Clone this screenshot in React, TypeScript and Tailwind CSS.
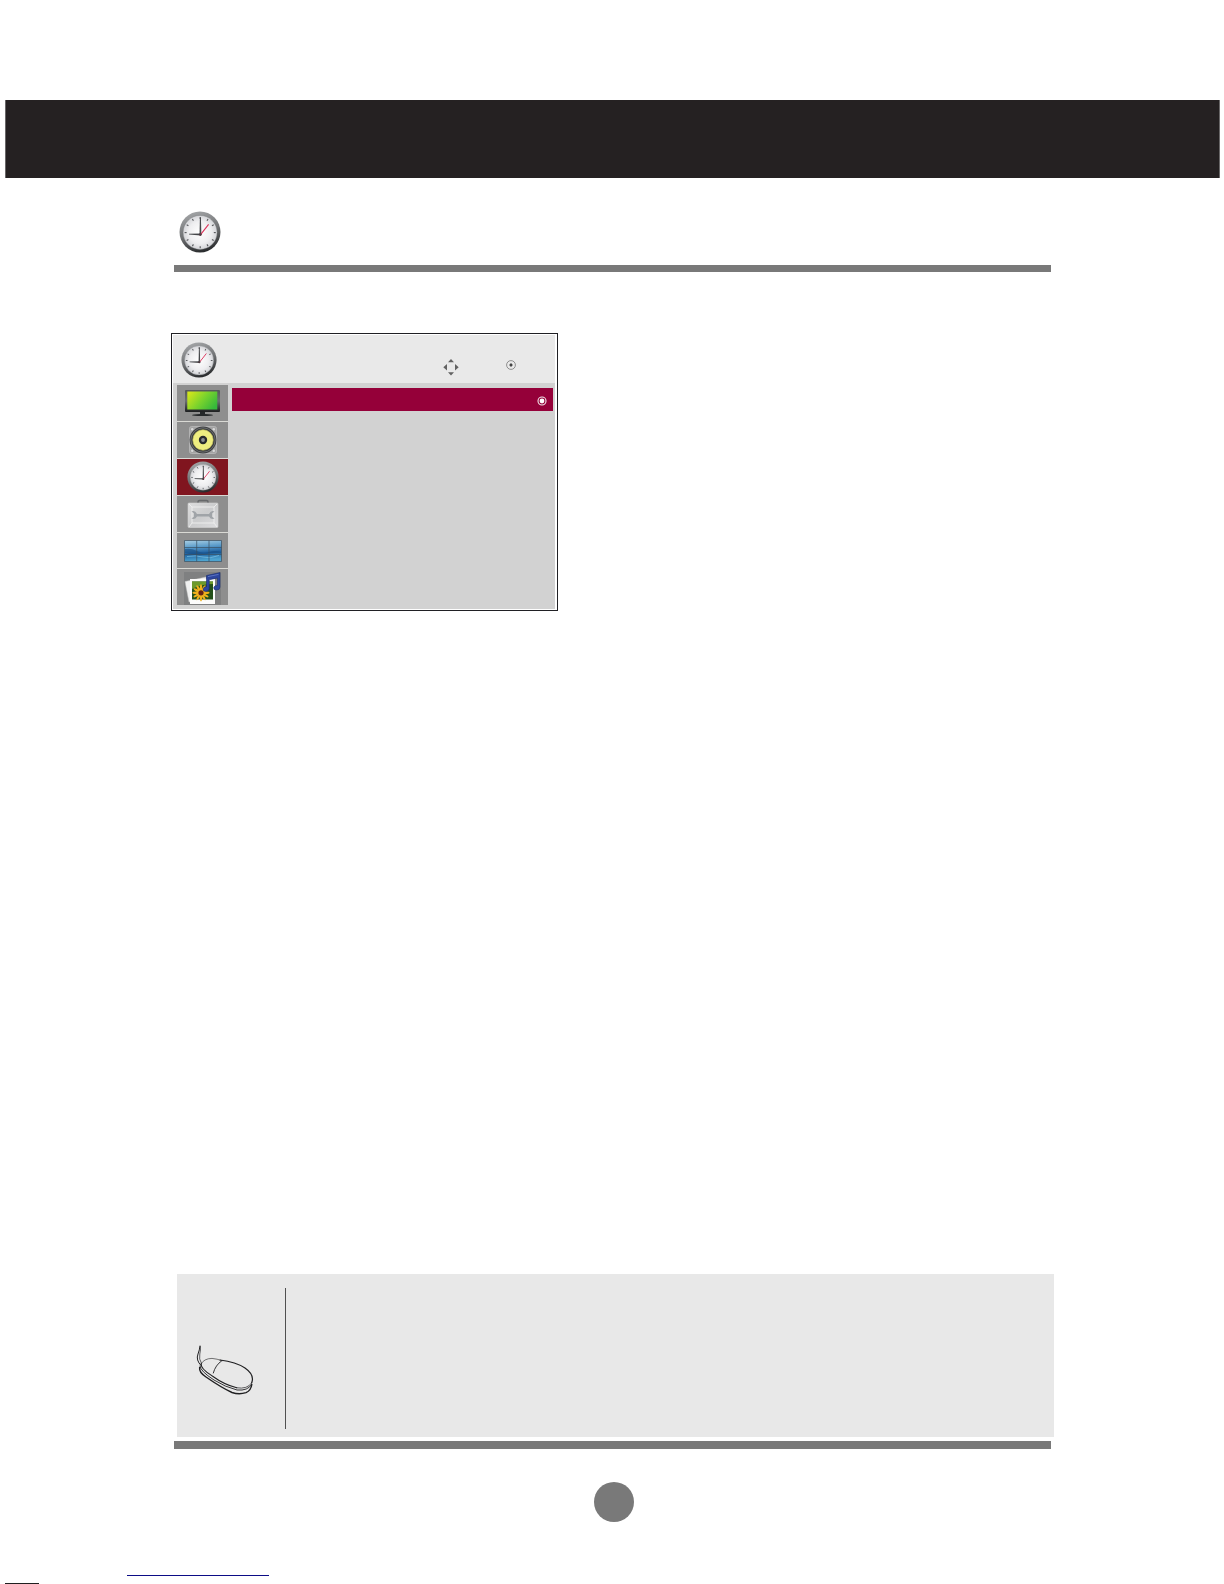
import type { ReactNode } from "react";

function Clock({ size, id }: { size: number; id: string }) {
  const ticks = Array.from({ length: 12 }, (_, i) => i * 30);
  return (
    <svg width={size} height={size} viewBox="0 0 42 42" className="block shrink-0">
      <defs>
        <linearGradient id={`${id}-rim`} x1="0.35" y1="0" x2="0.65" y2="1">
          <stop offset="0" stopColor="#a2a4a6" />
          <stop offset="0.5" stopColor="#707274" />
          <stop offset="1" stopColor="#242628" />
        </linearGradient>
        <radialGradient id={`${id}-face`} cx="0.5" cy="0.5" r="0.55">
          <stop offset="0" stopColor="#ffffff" />
          <stop offset="0.6" stopColor="#eeeef0" />
          <stop offset="1" stopColor="#cdced2" />
        </radialGradient>
      </defs>
      <circle cx="21" cy="21" r="20.5" fill={`url(#${id}-rim)`} />
      <circle cx="21.1" cy="21.4" r="17" fill={`url(#${id}-face)`} stroke="#77797c" strokeWidth="0.4" />
      {ticks.map((a) => (
        <line key={a} x1="21.2" y1="6" x2="21.2" y2="8" stroke="#55575a" strokeWidth="1.1" transform={`rotate(${a} 21.2 21.6)`} />
      ))}
      <path d="M20.9 6.4H21.9L22.4 24H20.5Z" fill="#45474a" />
      <path d="M10 22.8L21.5 22.6V24.4L10 23.6Z" fill="#45474a" />
      <path d="M21 24.4L29.6 13.4" stroke="#dc3159" strokeWidth="1.1" />
      <circle cx="21.4" cy="23.6" r="1.3" fill="#4a3a40" />
    </svg>
  );
}

function Monitor() {
  return (
    <svg width="37" height="28" viewBox="0 0 37 28">
      <defs>
        <linearGradient id="screen" x1="0" y1="0.2" x2="1" y2="0.7">
          <stop offset="0" stopColor="#d0e51c" />
          <stop offset="0.5" stopColor="#7bd32c" />
          <stop offset="1" stopColor="#35b83b" />
        </linearGradient>
        <linearGradient id="bezel" x1="0" y1="0" x2="0" y2="1">
          <stop offset="0" stopColor="#55585a" />
          <stop offset="0.5" stopColor="#6d7073" />
          <stop offset="1" stopColor="#1d1f20" />
        </linearGradient>
      </defs>
      <rect x="1" y="1" width="35" height="22" rx="1" fill="url(#bezel)" />
      <rect x="3.3" y="2.5" width="30" height="18" fill="url(#screen)" />
      <path d="M16 23H21V25Q29 25.3 29 26.2Q29 27 18.5 27Q8 27 8 26.2Q8 25.3 16 25Z" fill="#25282a" />
    </svg>
  );
}

function Speaker() {
  return (
    <svg width="30" height="30" viewBox="0 0 30 30" className="-mt-px">
      <rect x="1.5" y="1.5" width="27" height="27" rx="2" fill="#a4a4a4" stroke="#bebebe" strokeWidth="0.7" />
      <circle cx="4.2" cy="4.2" r="1.2" fill="#dadada" />
      <circle cx="25.8" cy="4.2" r="1.2" fill="#dadada" />
      <circle cx="4.2" cy="25.8" r="1.2" fill="#dadada" />
      <circle cx="25.8" cy="25.8" r="1.2" fill="#dadada" />
      <circle cx="15" cy="15" r="13.4" fill="#3c3e40" />
      <circle cx="15" cy="15" r="12.2" fill="none" stroke="#76787a" strokeWidth="0.8" />
      <circle cx="15" cy="15" r="10.2" fill="#eeed80" stroke="#c8c560" strokeWidth="0.6" />
      <circle cx="15" cy="15" r="4.2" fill="#27292d" />
      <circle cx="15" cy="15" r="1.9" fill="#8a8c90" />
    </svg>
  );
}

function Toolbox() {
  return (
    <svg width="32" height="30" viewBox="0 0 32 30">
      <defs>
        <linearGradient id="case" x1="0" y1="0" x2="1" y2="1">
          <stop offset="0" stopColor="#dedede" />
          <stop offset="0.5" stopColor="#cbcccd" />
          <stop offset="1" stopColor="#dddddf" />
        </linearGradient>
      </defs>
      <path d="M11 5V3Q11 1.4 12.5 1.4H19.5Q21 1.4 21 3V5" fill="none" stroke="#66686a" strokeWidth="1.5" />
      <rect x="1" y="4" width="30" height="24.5" rx="1" fill="url(#case)" stroke="#d4d4d4" strokeWidth="0.6" />
      <path d="M2 5L5 8H27L30 5M5 8V24H27V8M5 24L2 28M27 24L30 28" fill="none" stroke="#efefef" strokeWidth="0.9" />
      <path d="M4.5 12.5Q8 11 10 15H22Q24 11 27.5 12.5L25 14.3V17.7L27.5 19.5Q24 21 22 17.4H10Q8 21 4.5 19.5L7 17.7V14.3Z" fill="#a0a4a8" />
    </svg>
  );
}

function VideoWall() {
  return (
    <svg width="38" height="22" viewBox="0 0 38 22">
      <defs>
        <linearGradient id="sea" x1="0" y1="0" x2="0.15" y2="1">
          <stop offset="0" stopColor="#a9cfe4" />
          <stop offset="0.35" stopColor="#5b9cca" />
          <stop offset="0.65" stopColor="#1f609f" />
          <stop offset="1" stopColor="#4da4d0" />
        </linearGradient>
      </defs>
      <rect x="0.5" y="0.5" width="37" height="21" fill="url(#sea)" />
      <path d="M1 9Q7 8 13 11T25 12T37 12V13.5Q28 12.5 21 14.5T1 13Z" fill="#174d82" opacity="0.6" />
      <path d="M3 16.5Q12 15 19 17T35 15.5" fill="none" stroke="#7fc4e4" strokeWidth="1" opacity="0.7" />
      <path d="M0.5 0.5H37.5V21.5H0.5ZM12.7 0.5V21.5M25 0.5V21.5M0.5 7.5H37.5M0.5 14.5H37.5" fill="none" stroke="#3a4f60" strokeWidth="0.7" />
    </svg>
  );
}

function Media() {
  return (
    <svg width="37" height="33" viewBox="0 0 37 33" className="mt-[3px]">
      <rect x="0" y="0" width="37" height="33" fill="#7f8081" />
      <path d="M1 9.5L22 5L26 28L5 30Z" fill="#f0f0f0" stroke="#bebebe" strokeWidth="0.5" />
      <rect x="6" y="7" width="25" height="25" fill="#fcfcfc" />
      <rect x="8" y="9.5" width="21" height="18" fill="#24501a" />
      <path d="M8 9.5H29V12Q18 12 8 17Z" fill="#6d9a2c" />
      <g fill="#efb01c">
        {[0, 30, 60, 90, 120, 150, 180, 210, 240, 270, 300, 330].map((a) => (
          <ellipse key={a} cx="17" cy="16.5" rx="1.2" ry="4.3" transform={`rotate(${a} 17 20.8)`} />
        ))}
      </g>
      <circle cx="17" cy="20.8" r="2.6" fill="#642214" />
      <path d="M22.5 3.5L36 0.6V15Q36 18 32.5 18Q29.5 18 29.8 15.5Q30.3 13.3 33.5 13.5V6L25.2 7.8V16.5Q25 19.4 21.7 19.4Q18.8 19.4 19.2 16.8Q19.6 14.7 22.5 14.8Z" fill="#2d469e" stroke="#172b70" strokeWidth="0.6" />
      <path d="M24 4.6L34.5 2.4" stroke="#5f78c6" strokeWidth="0.9" />
    </svg>
  );
}

function MouseDrawing() {
  return (
    <svg width="60" height="54" viewBox="0 0 60 54" fill="none" stroke="#202022" strokeLinecap="round">
      <path d="M5 1Q4.6 5 3 9Q0.6 15 6 20.5" strokeWidth="1" />
      <path d="M5.4 1.5Q5.8 5 4.8 9Q3.6 14 6.5 18.5" strokeWidth="0.7" />
      <path d="M6 19Q9 13.5 17 13.4Q22 13.8 27 15.7" strokeWidth="0.6" />
      <path d="M25 15Q41 17 50 23Q60 30 56.6 38" strokeWidth="1.2" />
      <path d="M56.6 38Q52.5 44.5 41.7 42.8" strokeWidth="0.7" />
      <path d="M41.7 42.8Q29 39.5 18 31.5Q5 23.5 6.2 18.5" strokeWidth="1.1" />
      <path d="M5 21Q5 26 19 35Q30 42 42 45Q53 46 56.6 39.5" strokeWidth="0.9" />
      <path d="M4.6 22.5Q4 27.5 11 32Q27 43 37 47.5Q44 50 51 47.7Q56 45.5 56.8 39.5" strokeWidth="1.4" />
      <path d="M26.5 16Q20.5 20 18.3 28" strokeWidth="0.9" />
    </svg>
  );
}

function Tile({ children, style = "h-9 bg-[#8e8e8e]" }: { children: ReactNode; style?: string }) {
  return <div className={`flex w-[51px] shrink-0 items-center justify-center ${style}`}>{children}</div>;
}

function TimeMenu() {
  return (
    <section className="mt-[61px] ml-[171px] flex h-[278px] w-[387px] flex-col border border-[#202024] bg-white pt-px pr-0.5 pb-px pl-px">
      <header className="flex h-12 shrink-0 bg-[#e9e9e9] pt-[7px] pl-2">
        <Clock size={36} id="menu-clock" />
        <svg width="16" height="18" viewBox="0 0 16 18" fill="#626262" className="mt-[16px] ml-[226px]">
          <path d="M8 1L11 4.3H5ZM8 17.5L5 14.2H11ZM0.3 9.2L4 6V12.4ZM15.7 9.2L12 6V12.4Z" />
        </svg>
        <svg width="10" height="10" viewBox="0 0 10 10" className="mt-[18px] ml-[47px]">
          <circle cx="5" cy="5" r="4.4" fill="none" stroke="#777777" strokeWidth="0.8" />
          <path d="M5 3.1L6.9 5L5 6.9L3.1 5Z" fill="#444444" />
        </svg>
      </header>
      <div className="flex min-h-0 flex-1 bg-[#d2d2d2] pt-0.5 pl-1">
        <nav className="flex h-[220px] flex-col gap-px bg-[#d9d9d4]">
          <Tile><Monitor /></Tile>
          <Tile><Speaker /></Tile>
          <Tile style="h-9 bg-[#80151f]"><Clock size={32} id="tab-clock" /></Tile>
          <Tile><Toolbox /></Tile>
          <Tile style="h-[35px] bg-[#8e8e8e]"><VideoWall /></Tile>
          <Tile><Media /></Tile>
        </nav>
        <div className="mt-[3px] ml-1 flex h-[23px] w-[321px] items-center justify-end bg-[#950039] pr-1.5">
          <svg width="10" height="10" viewBox="0 0 10 10" className="mt-[3px]">
            <circle cx="5" cy="5" r="4" fill="none" stroke="#f2e6ea" strokeWidth="1.1" />
            <circle cx="5" cy="5" r="2.4" fill="#ffffff" />
          </svg>
        </div>
      </div>
    </section>
  );
}

export default function App() {
  return (
    <main className="flex h-[1584px] w-[1224px] flex-col overflow-hidden bg-white font-['Liberation_Sans',sans-serif]">
      <div className="mt-[100px] ml-[5px] h-[78px] w-[1215px] shrink-0 border-x border-[#696768] bg-[#252122]" />
      <div className="mt-[33px] ml-[179px] h-[42px] shrink-0">
        <Clock size={42} id="title-clock" />
      </div>
      <div className="mt-3 ml-[174px] h-[7px] w-[877px] shrink-0 bg-[#797979]" />
      <TimeMenu />
      <section className="mt-[663px] ml-[177px] flex h-[163px] w-[877px] shrink-0 bg-[#e8e8e8]">
        <div className="w-[108px] pt-[71px] pl-[18px]">
          <MouseDrawing />
        </div>
        <div className="mt-3.5 h-[141px] w-px bg-[#505050]" />
      </section>
      <div className="mt-1 ml-[174px] h-2 w-[877px] shrink-0 bg-[#797979]" />
      <div className="mt-[33px] ml-[594px] h-[39.5px] w-[39.5px] shrink-0 rounded-full bg-[#797979]" />
      <div className="mt-[53.5px] ml-[127px] h-px w-[142px] shrink-0 bg-[#0c0c86]" />
      <div className="mt-[7px] ml-[5px] h-px w-[34px] shrink-0 bg-[#202020]" />
    </main>
  );
}
